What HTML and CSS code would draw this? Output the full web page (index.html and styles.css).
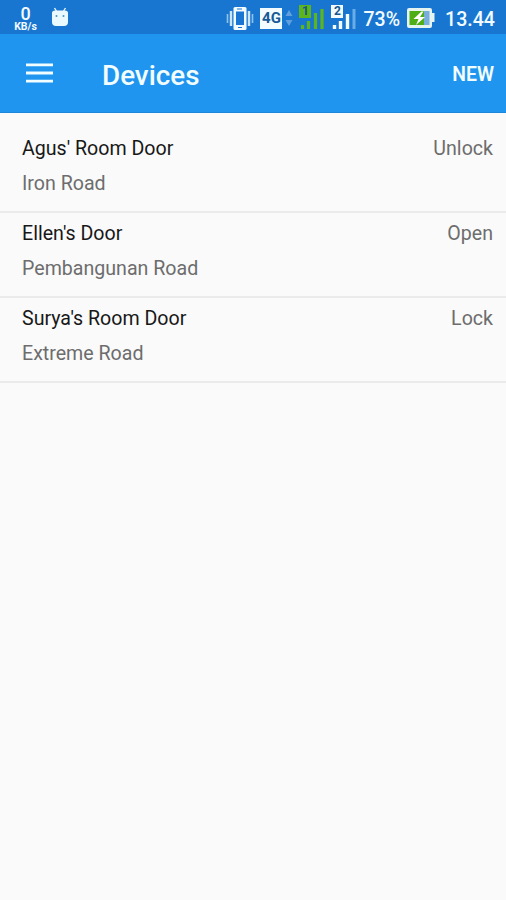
FILE: index.html
```
<!DOCTYPE html>
<html lang="en">
  <head>
    <meta charset="UTF-8" />
    <meta name="viewport" content="width=device-width, initial-scale=1.0" />
    <title>Devices</title>
    <link rel="stylesheet" href="styles.css">
  </head>
  <body>
    <div class="status-bar">
      <div class="speed">
        <span class="speed-value">0</span>
        <span class="speed-unit">KB/s</span>
      </div>
      <svg class="android" width="18" height="20" viewBox="0 0 18 20">
        <path d="M3.500 1l2.500 4M14.500 1l-2.500 4" stroke="#eafaff" stroke-width="1.400" />
        <path d="M1 6q0-2.500 3-2.500h10q3 0 3 2.500v9q0 4-4 4H5q-4 0-4-4z" fill="#eafaff" />
        <circle cx="5.500" cy="9" r="1" fill="#4b94bd" />
        <circle cx="12.500" cy="9" r="1" fill="#4b94bd" />
      </svg>

      <svg class="vibrate" width="28" height="24" viewBox="0 0 28 24">
        <path d="M1.500 8v9M26.500 8v9" stroke="#8cc4ee" stroke-width="1.600" />
        <path d="M5 5v15M23 5v15" stroke="#c9e6fa" stroke-width="2.400" />
        <rect x="7.500" y="1" width="13" height="23" rx="1.500" fill="#f2fbff" />
        <rect x="10" y="5.500" width="8" height="13.500" fill="#1976d2" />
        <path d="M11 3h5M12 21.500h4" stroke="#1976d2" />
      </svg>
      <span class="network">4G</span>
      <svg class="arrows" width="8" height="18" viewBox="0 0 8 18">
        <path d="M4 1l3.500 6h-7zM4 17l3.500-6h-7z" fill="#5f9fdc" />
      </svg>
      <div class="sim sim-one">
        <svg width="25" height="24" viewBox="0 0 25 24">
          <path d="M3.500 20v4M9.500 16v8M16.500 8v16M23 4v20" stroke="#5cb51c" stroke-width="3.200" />
        </svg>
        <span class="sim-number">1</span>
      </div>
      <div class="sim sim-two">
        <svg width="25" height="24" viewBox="0 0 25 24">
          <path d="M3.500 20v4M9.500 16v8M16.500 9v15" stroke="#f2fbff" stroke-width="3.400" />
          <path d="M23 4v20" stroke="#69ace9" stroke-width="3" />
        </svg>
        <span class="sim-number">2</span>
      </div>
      <span class="percent">73%</span>
      <svg class="battery" width="28" height="20" viewBox="0 0 28 20">
        <path d="M2 0h21q2 0 2 2v3h2.500v9H25v4q0 2-2 2H2q-2 0-2-2V2q0-2 2-2z" fill="#e6f4ef" />
        <path d="M2.500 3H17v14H2.500z" fill="#4fae18" />
        <path d="M17 3h5.500v14H17z" fill="#78aede" />
        <path d="M14.500 3.500L6.500 11h5l-2.500 6 9-8h-5l3.500-5.500z" fill="#fff" />
      </svg>
      <span class="clock">13.44</span>
    </div>

    <header class="app-bar">
      <button class="menu" aria-label="Menu">
        <svg width="27" height="20" viewBox="0 0 27 20">
          <path d="M0 1.800h27M0 10h27M0 18.200h27" stroke="#f2fdff" stroke-width="2.800" />
        </svg>
      </button>
      <h1>Devices</h1>
      <button class="new">NEW</button>
    </header>

    <ul class="devices">
      <li class="device">
        <div class="device-info">
          <p class="name">Agus' Room Door</p>
          <p class="location">Iron Road</p>
        </div>
        <span class="state">Unlock</span>
      </li>
      <li class="device">
        <div class="device-info">
          <p class="name">Ellen's Door</p>
          <p class="location">Pembangunan Road</p>
        </div>
        <span class="state">Open</span>
      </li>
      <li class="device">
        <div class="device-info">
          <p class="name">Surya's Room Door</p>
          <p class="location">Extreme Road</p>
        </div>
        <span class="state">Lock</span>
      </li>
    </ul>
  </body>
</html>
```

FILE: styles.css
```
* {
  box-sizing: border-box;
}
body {
  margin: 0;
  min-height: 100vh;
  background: #fafafa;
  font-family: Roboto, "Liberation Sans", sans-serif;
}
button {
  padding: 0;
  border: 0;
  background: transparent;
  color: #f2fdff;
  font-family: inherit;
  cursor: pointer;
}

/* status bar */
.status-bar {
  display: flex;
  align-items: center;
  height: 34px;
  padding: 2px 11px 0 13px;
  background: #1976d0;
  color: #f2fbff;
}
.speed {
  display: flex;
  flex-direction: column;
  align-items: center;
  width: 25px;
  font-weight: 500;
}
.speed-value {
  font-size: 18px;
  line-height: 17px;
}
.speed-unit {
  font-size: 10.5px;
  font-weight: 700;
  line-height: 10px;
}
.android {
  margin: -2px 0 0 13px;
}
.vibrate {
  margin-left: auto;
}
.network {
  width: 22px;
  height: 21px;
  margin: 0 0 0 6px;
  background: #f2fbff;
  color: #185a96;
  font-size: 15px;
  font-weight: 700;
  line-height: 21px;
  text-align: center;
}
.arrows {
  margin-left: 3px;
}
.sim {
  position: relative;
  height: 24px;
  margin: -2px 0 0 6px;
}
.sim-two {
  margin-left: 7px;
}
.sim svg {
  display: block;
}
.sim-number {
  position: absolute;
  top: 0;
  left: 0;
  width: 12px;
  height: 13px;
  background: #f2fbff;
  color: #17568f;
  font-size: 12px;
  font-weight: 700;
  line-height: 13px;
  text-align: center;
}
.sim-one .sim-number {
  background: #5cb51c;
}
.percent {
  margin: 2px 0 0 7px;
  font-size: 19.5px;
  font-weight: 500;
}
.battery {
  margin-left: 7px;
}
.clock {
  margin: 2px 0 0 10px;
  font-size: 19.6px;
  font-weight: 500;
}

/* app bar */
.app-bar {
  display: flex;
  align-items: center;
  height: 79px;
  padding: 0 12px 0 26px;
  border-bottom: 1px solid #1b87dc;
  background: #1f95ef;
}
.menu {
  height: 20px;
}
.menu svg {
  display: block;
}
h1 {
  margin: 4px 0 0 49px;
  color: #f2fdff;
  font-size: 27.8px;
  font-weight: 500;
}
.new {
  margin: 3px 0 0 auto;
  font-size: 19.4px;
  font-weight: 600;
}

/* device list */
.devices {
  margin: 0;
  padding: 15px 0 0;
  list-style: none;
}
.device {
  display: flex;
  justify-content: space-between;
  height: 85px;
  padding: 9px 13px 0 22px;
  border-bottom: 2px solid #ebebeb;
  font-size: 19.6px;
  line-height: 24px;
}
.device p {
  margin: 0 0 11px;
}
.name {
  color: #181818;
}
.location,
.state {
  color: #6d6d6d;
}
```
